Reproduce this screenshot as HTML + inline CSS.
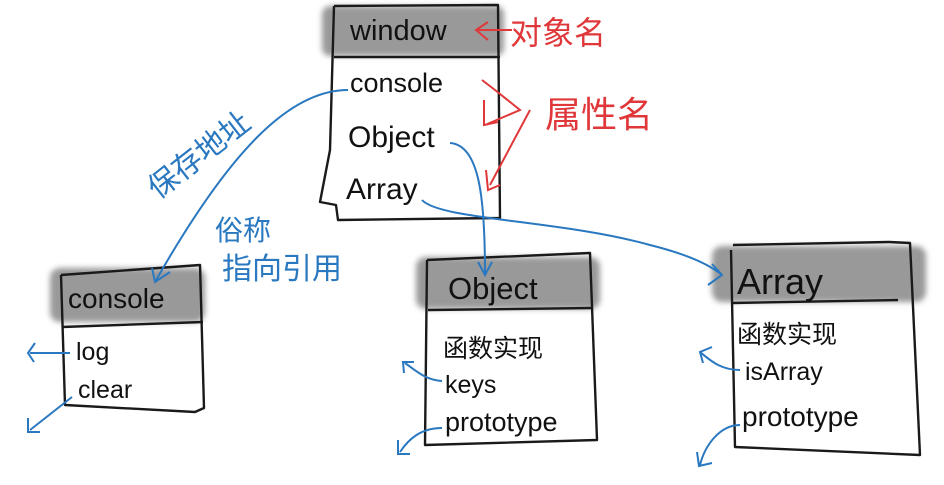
<!DOCTYPE html>
<html><head><meta charset="utf-8"><style>
body{margin:0;background:#fff;}
svg{display:block}
text{font-family:"Liberation Sans","Noto Sans CJK SC",sans-serif;}
</style></head><body>
<svg width="944" height="485" viewBox="0 0 944 485" xmlns="http://www.w3.org/2000/svg">
<defs>
<filter id="blur" x="-20%" y="-40%" width="140%" height="180%"><feGaussianBlur stdDeviation="3"/></filter>
</defs>
<g fill="#999" filter="url(#blur)">
<rect x="322" y="6" width="182" height="50" rx="8"/>
<rect x="50" y="268" width="155" height="54" rx="10"/>
<rect x="416" y="257" width="184" height="52" rx="10"/>
<rect x="712" y="246" width="214" height="56" rx="10"/>
</g>
<g fill="none" stroke="#1a1a1a" stroke-width="2.4" stroke-linejoin="round">
<path d="M334 6 L498 5 L500 218 L338 220 L336 205 L320 202 L330 150 L334 6"/>
<path d="M334 57 L500 57"/>
<path d="M61 275 L200 265 L204 408 L195 412 L65 405 L61 275"/>
<path d="M62 327 L203 322"/>
<path d="M427 260 L590 253 L597 440 L425 445 L427 260"/>
<path d="M428 310 L593 308"/>
<path d="M733 245 L889 242 L910 243 L920 455 L735 447 L731 250"/>
<path d="M732 303 L898 300"/>
</g>
<g fill="#111" font-size="26">
<text x="350" y="40" font-size="29">window</text>
<text x="350" y="92" font-size="27">console</text>
<text x="348" y="147" font-size="30">Object</text>
<text x="346" y="199" font-size="30">Array</text>
<text x="68" y="308" font-size="28">console</text>
<text x="76" y="360" font-size="25">log</text>
<text x="78" y="398" font-size="25">clear</text>
<text x="448" y="299" font-size="31">Object</text>
<text x="443" y="357" font-size="25">函数实现</text>
<text x="445" y="393" font-size="25">keys</text>
<text x="445" y="431" font-size="27">prototype</text>
<text x="737" y="294" font-size="36">Array</text>
<text x="737" y="343" font-size="25">函数实现</text>
<text x="745" y="380" font-size="25">isArray</text>
<text x="742" y="426" font-size="28">prototype</text>
</g>
<g stroke="#e0383a" stroke-width="2" fill="none">
<path d="M478 30 L512 30 M488 22 L476 30 L488 40"/>
<path d="M482 80 L495 90 L520 110 L485 125 M484 100 L484 125 L498 122 M530 110 L490 185 M486 170 L488 190 L500 185"/>
</g>
<text x="510" y="44" font-size="32" fill="#e0383a">对象名</text>
<text x="545" y="127" font-size="36" fill="#e0383a">属性名</text>
<g stroke="#2a78c0" stroke-width="2" fill="none">
<path d="M348 90 C290 90 230 150 155 282 M152 268 L155 282 L170 272"/>
<path d="M450 143 C480 145 485 200 485 275 M478 262 L485 275 L492 262"/>
<path d="M422 200 C440 220 560 220 650 245 C690 255 710 265 722 275 M712 264 L722 275 L708 285"/>
<path d="M70 353 L30 353 M35 343 L28 353 L34 362"/>
<path d="M72 397 L30 430 M28 418 L28 432 L40 432"/>
<path d="M442 381 C425 380 415 370 405 363 M404 373 L403 362 L414 362"/>
<path d="M442 428 C420 428 408 440 400 452 M398 440 L398 454 L410 454"/>
<path d="M740 370 C720 370 710 360 700 352 M703 363 L700 352 L712 347"/>
<path d="M740 425 C720 425 705 445 700 465 M697 452 L699 466 L712 463"/>
</g>
<g fill="#2a78c0">
<text x="0" y="0" font-size="30" transform="translate(158,200) rotate(-38)">保存地址</text>
<text x="215" y="240" font-size="28">俗称</text>
<text x="222" y="279" font-size="30">指向引用</text>
</g>
</svg>
</body></html>
